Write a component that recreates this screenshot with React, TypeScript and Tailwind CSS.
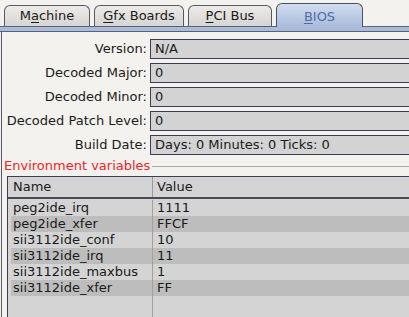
import React from "react";

const font = { fontFamily: '"DejaVu Sans", "Liberation Sans", sans-serif' };

function Tab({ label, hot, active, w }: { label: string; hot: number; active?: boolean; w: string }) {
  const text = (
    <span>
      {label.slice(0, hot)}
      <span className="underline underline-offset-2">{label[hot]}</span>
      {label.slice(hot + 1)}
    </span>
  );
  if (active) {
    return (
      <div
        className={`${w} -mb-px flex h-[24px] items-start justify-center rounded-t-[6px] border border-b-0 border-[#4a5068] bg-gradient-to-b from-[#d2ddef] to-[#a9bbdb] pt-[3px] text-[13px] text-[#4e6ca6]`}
      >
        {text}
      </div>
    );
  }
  return (
    <div
      className={`${w} flex h-[21px] items-center justify-center rounded-t-[6px] border border-b-0 border-[#55586a] bg-gradient-to-b from-[#ecebe8] to-[#d7d5d1] text-[13px] text-[#1a1a1a]`}
    >
      {text}
    </div>
  );
}

function Field({ label, value }: { label: string; value: string }) {
  return (
    <div className="flex h-[20px] items-center">
      <div className="w-[148px] shrink-0 pr-[3px] text-right text-[13px] text-[#1a1a1a]">{label}</div>
      <div className="flex h-[20px] flex-1 items-center border border-[#3c3c52] bg-[#d3d3d3] pl-[4px] text-[13px] text-[#1a1a1a]">
        {value}
      </div>
    </div>
  );
}

const envVars = [
  ["peg2ide_irq", "1111"],
  ["peg2ide_xfer", "FFCF"],
  ["sii3112ide_conf", "10"],
  ["sii3112ide_irq", "11"],
  ["sii3112ide_maxbus", "1"],
  ["sii3112ide_xfer", "FF"],
];

export default function App() {
  return (
    <div className="h-[317px] w-[409px] overflow-hidden bg-[#f4f2ef]" style={font}>
      <div className="w-[420px]">
        <div className="flex h-[26px] items-end gap-[4px] pl-[4px]">
          <Tab label="Machine" hot={1} w="w-[86px]" />
          <Tab label="Gfx Boards" hot={0} w="w-[90px]" />
          <Tab label="PCI Bus" hot={0} w="w-[84px]" />
          <Tab label="BIOS" hot={0} w="w-[87px]" active />
        </div>
        <div className="h-[6px] border-t border-b border-[#5a6278] bg-[#a9badb]" />
        <div className="ml-[1px] border-l border-[#55586a] pt-[7px]">
          <div className="flex flex-col gap-[4px]">
            <Field label="Version:" value="N/A" />
            <Field label="Decoded Major:" value="0" />
            <Field label="Decoded Minor:" value="0" />
            <Field label="Decoded Patch Level:" value="0" />
            <Field label="Build Date:" value="Days: 0 Minutes: 0 Ticks: 0" />
          </div>
          <div className="mt-[3px] flex h-[16px] items-center pl-[2px]">
            <span className="text-[13px] text-[#f02424]">Environment variables</span>
            <div className="ml-[2px] h-px flex-1 bg-[#a8a8a8]" />
          </div>
          <div className="ml-[5px] mt-[2px] h-[170px] border border-[#3c3c52] bg-[#d4d4d4]">
            <div className="flex h-[22px] items-center border-b-2 border-[#4a4a5a] text-[13px] text-[#1a1a1a]">
              <div className="w-[145px] shrink-0 border-r border-[#9a9a9a] pl-[5px]">Name</div>
              <div className="pl-[4px]">Value</div>
            </div>
            <div className="mt-[1px] flex flex-col pl-[3px]">
              {envVars.map(([n, v], i) => (
                <div
                  key={n}
                  className={`flex h-[16px] items-center text-[13px] text-[#1a1a1a] ${i % 2 ? "bg-[#bdbdbd]" : "bg-[#d4d4d4]"}`}
                >
                  <div className="w-[142px] shrink-0 border-r border-[#a0a0a0] pl-[2px] leading-[16px]">{n}</div>
                  <div className="pl-[4px]">{v}</div>
                </div>
              ))}
              <div className="h-[40px] w-[142px] border-r border-[#a0a0a0]" />
            </div>
          </div>
        </div>
      </div>
    </div>
  );
}
